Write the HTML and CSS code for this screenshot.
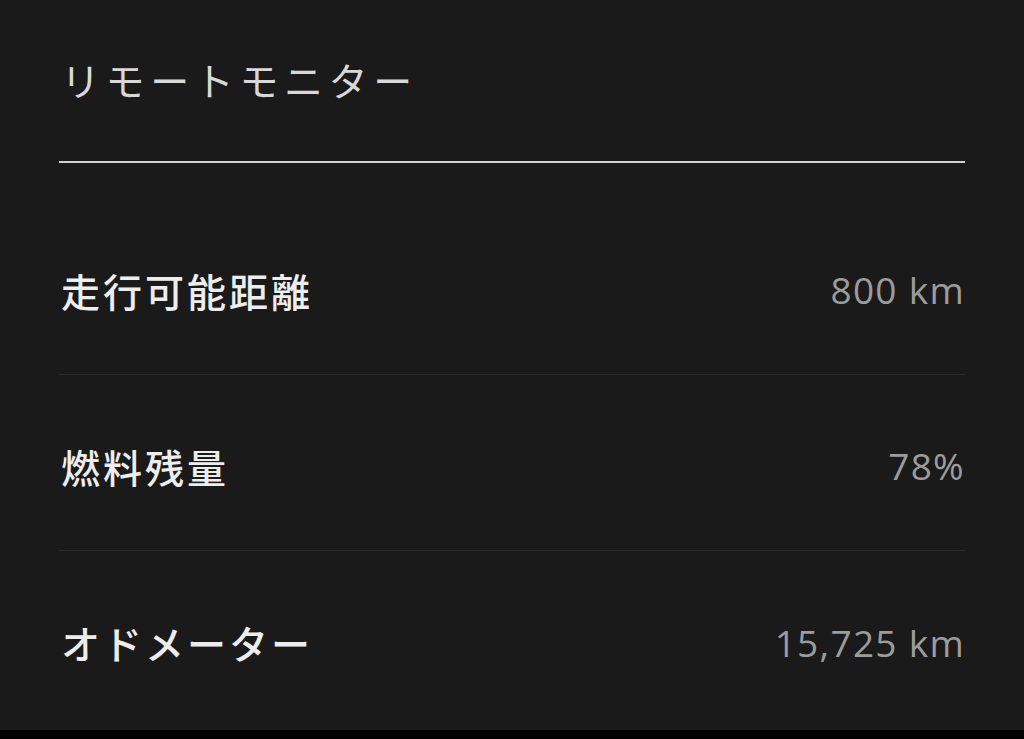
FILE: index.html
```html
<!DOCTYPE html>
<html lang="ja">
<head>
  <meta charset="UTF-8">
  <meta name="viewport" content="width=device-width, initial-scale=1.0">
  <title>リモートモニター</title>
  <link rel="stylesheet" href="styles.css">
</head>
<body>

  <div class="screen">
    <div class="header">
      <h2 class="title">リモートモニター</h2>
    </div>

    <ul class="monitor-list">
      <li class="monitor-row">
        <span class="label">走行可能距離</span>
        <span class="value">800 km</span>
      </li>
      <li class="monitor-row">
        <span class="label">燃料残量</span>
        <span class="value">78%</span>
      </li>
      <li class="monitor-row">
        <span class="label">オドメーター</span>
        <span class="value">15,725 km</span>
      </li>
    </ul>
  </div>

</body>
</html>
```

FILE: styles.css
```css
body {
  margin: 0;
  padding: 0;
  background-color: #000;
  font-family: 'Noto Sans CJK JP', 'Open Sans', sans-serif;
}

.screen {
  height: 730px;
  padding: 0 59px;
  background-color: #1a1a1a;
  box-sizing: border-box;
}

.header {
  padding-top: 57px;
  padding-bottom: 60px;
  border-bottom: 2px solid #d2d2d2;
}

.title {
  margin: 0;
  padding-left: 2px;
  font-size: 39px;
  font-weight: normal;
  line-height: 44px;
  letter-spacing: 5.6px;
  color: #d8d8d8;
}

.monitor-list {
  list-style: none;
  margin: 36px 0 0 0;
  padding: 0;
}

.monitor-row {
  display: flex;
  justify-content: space-between;
  align-items: center;
  height: 176px;
  padding-top: 6px;
  box-sizing: border-box;
  border-bottom: 1px solid #2c2c2c;
}

.monitor-row:last-child {
  border-bottom: none;
}

.label {
  padding-left: 2px;
  font-size: 39px;
  font-weight: 500;
  letter-spacing: 3px;
  color: #ededed;
}

.value {
  font-family: 'Open Sans', sans-serif;
  font-size: 37px;
  letter-spacing: 1.3px;
  color: #9c9c9c;
}
```
